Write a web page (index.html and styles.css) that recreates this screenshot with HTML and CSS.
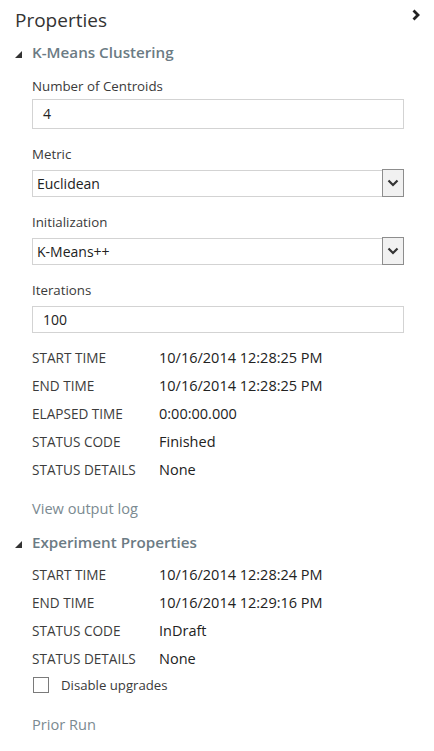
FILE: index.html
```html
<!DOCTYPE html>
<html>
<head>
<meta charset="utf-8">
<link rel="stylesheet" href="styles.css">
</head>
<body>
<div class="panel">
  <div class="header">
    <div class="title">Properties</div>
    <svg class="collapse" width="8" height="12" viewBox="0 0 8 12"><path d="M1.5 1.5 L6 6 L1.5 10.5" fill="none" stroke="#222" stroke-width="2.8"/></svg>
  </div>

  <div class="section-head">
    <svg class="tri" width="7" height="7" viewBox="0 0 7 7"><polygon points="7,0 7,7 0,7" fill="#333"/></svg>
    <span>K-Means Clustering</span>
  </div>

  <div class="content">
    <div class="field field-first">
      <div class="label">Number of Centroids</div>
      <div class="control control-tall">4</div>
    </div>
    <div class="field">
      <div class="label">Metric</div>
      <div class="control select">
        <span>Euclidean</span>
        <span class="drop"><svg width="12" height="8" viewBox="0 0 12 8"><path d="M1.5 1.5 L6 6 L10.5 1.5" fill="none" stroke="#333" stroke-width="2.2"/></svg></span>
      </div>
    </div>
    <div class="field">
      <div class="label">Initialization</div>
      <div class="control select">
        <span>K-Means++</span>
        <span class="drop"><svg width="12" height="8" viewBox="0 0 12 8"><path d="M1.5 1.5 L6 6 L10.5 1.5" fill="none" stroke="#333" stroke-width="2.2"/></svg></span>
      </div>
    </div>
    <div class="field">
      <div class="label">Iterations</div>
      <div class="control">100</div>
    </div>

    <div class="table table-run">
      <div class="row"><span class="key">START TIME</span><span class="val">10/16/2014 12:28:25 PM</span></div>
      <div class="row"><span class="key">END TIME</span><span class="val">10/16/2014 12:28:25 PM</span></div>
      <div class="row"><span class="key">ELAPSED TIME</span><span class="val">0:00:00.000</span></div>
      <div class="row"><span class="key">STATUS CODE</span><span class="val">Finished</span></div>
      <div class="row"><span class="key">STATUS DETAILS</span><span class="val">None</span></div>
    </div>

    <div class="link link-log">View output log</div>
  </div>

  <div class="section-head section-exp">
    <svg class="tri" width="7" height="7" viewBox="0 0 7 7"><polygon points="7,0 7,7 0,7" fill="#333"/></svg>
    <span>Experiment Properties</span>
  </div>

  <div class="content">
    <div class="table table-exp">
      <div class="row"><span class="key">START TIME</span><span class="val">10/16/2014 12:28:24 PM</span></div>
      <div class="row"><span class="key">END TIME</span><span class="val">10/16/2014 12:29:16 PM</span></div>
      <div class="row"><span class="key">STATUS CODE</span><span class="val">InDraft</span></div>
      <div class="row"><span class="key">STATUS DETAILS</span><span class="val">None</span></div>
    </div>
    <div class="check">
      <span class="box"></span>
      <span class="check-label">Disable upgrades</span>
    </div>
    <div class="link link-prior">Prior Run</div>
  </div>
</div>
</body>
</html>
```

FILE: styles.css
```css
html, body {
  margin: 0;
  padding: 0;
  background: #ffffff;
}

body {
  font-family: "Open Sans", "Noto Sans", sans-serif;
  color: #2f2f2f;
  width: 434px;
  height: 751px;
  overflow: hidden;
}

.header {
  display: flex;
  justify-content: space-between;
  align-items: flex-start;
  padding: 8px 14px 0 15px;
}

.title {
  font-size: 19px;
  line-height: 25px;
  font-weight: 400;
  color: #333;
}

.collapse {
  margin-top: 1px;
}

.section-head {
  display: flex;
  align-items: center;
  margin-top: 9px;
  padding-left: 15px;
  height: 20px;
  font-size: 15.2px;
  line-height: 20px;
  font-weight: 600;
  color: #6b7b84;
}

.section-head .tri {
  margin-right: 10px;
  margin-top: 5px;
}

.section-exp {
  margin-top: 14px;
}

.content {
  padding: 0 30px 0 32px;
}

.field {
  margin-top: 15px;
}

.field-first {
  margin-top: 14px;
}

.label {
  font-size: 13.3px;
  line-height: 20px;
  color: #3a3a3a;
}

.control {
  box-sizing: border-box;
  margin-top: 6px;
  height: 27px;
  border: 1px solid #d3d3d3;
  font-size: 14px;
  line-height: 25px;
  padding-left: 10px;
  color: #222;
}

.control-tall {
  margin-top: 3px;
  height: 30px;
  line-height: 28px;
}

.select {
  display: flex;
  justify-content: space-between;
  align-items: stretch;
  padding-left: 4px;
  padding-right: 0;
}

.drop {
  box-sizing: border-box;
  width: 22px;
  margin: -2px -1px -1px 0;
  border: 1px solid #8d8d8d;
  background: #f1f1f1;
  display: flex;
  align-items: center;
  justify-content: center;
}

.table-run {
  margin-top: 11px;
}

.table-exp {
  margin-top: 9px;
}

.row {
  display: flex;
  align-items: baseline;
  height: 28px;
  line-height: 28px;
}

.key {
  width: 127px;
  flex: none;
  font-size: 13.6px;
  color: #3c3c3c;
}

.val {
  font-size: 14.5px;
  color: #222;
}

.link {
  font-size: 14.6px;
  line-height: 20px;
  color: #7b8a91;
}

.link-log {
  margin-top: 14px;
}

.check {
  display: flex;
  align-items: center;
  height: 20px;
  margin-top: 2px;
}

.box {
  box-sizing: border-box;
  width: 16px;
  height: 16px;
  border: 1px solid #7a7a7a;
  margin-left: 1px;
  margin-right: 12px;
}

.check-label {
  font-size: 13.2px;
  line-height: 20px;
  color: #3a3a3a;
}

.link-prior {
  margin-top: 19px;
}
```
